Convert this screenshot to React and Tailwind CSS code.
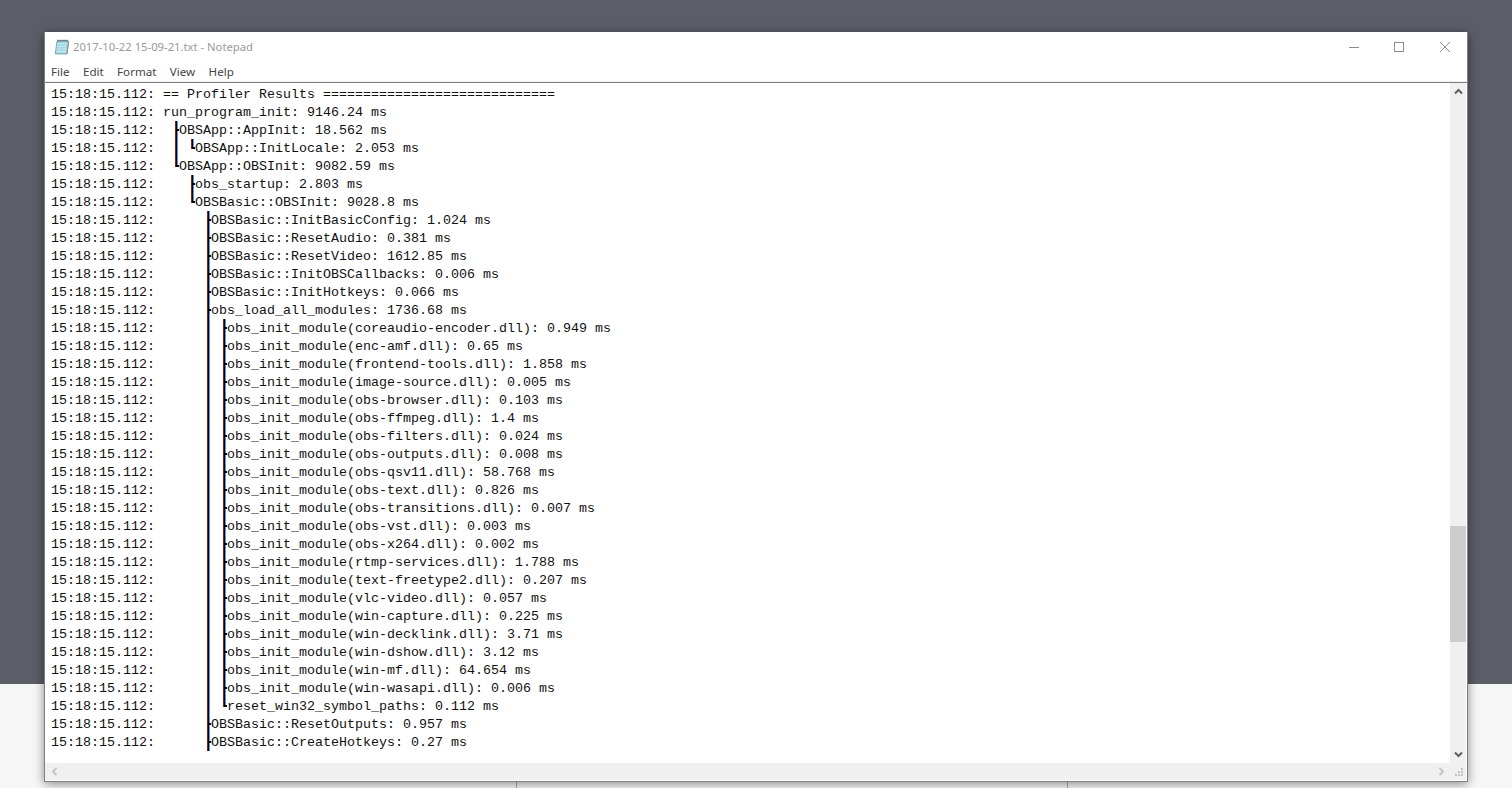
const TS = "15:18:15.112:";

// tree column: | line, T tee, L end, space empty
const rows = [
  ["", "== Profiler Results ============================="],
  ["", "run_program_init: 9146.24 ms"],
  [" T", "OBSApp::AppInit: 18.562 ms"],
  [" | L", "OBSApp::InitLocale: 2.053 ms"],
  [" L", "OBSApp::OBSInit: 9082.59 ms"],
  ["   T", "obs_startup: 2.803 ms"],
  ["   L", "OBSBasic::OBSInit: 9028.8 ms"],
  ["     T", "OBSBasic::InitBasicConfig: 1.024 ms"],
  ["     T", "OBSBasic::ResetAudio: 0.381 ms"],
  ["     T", "OBSBasic::ResetVideo: 1612.85 ms"],
  ["     T", "OBSBasic::InitOBSCallbacks: 0.006 ms"],
  ["     T", "OBSBasic::InitHotkeys: 0.066 ms"],
  ["     T", "obs_load_all_modules: 1736.68 ms"],
  ["     | T", "obs_init_module(coreaudio-encoder.dll): 0.949 ms"],
  ["     | T", "obs_init_module(enc-amf.dll): 0.65 ms"],
  ["     | T", "obs_init_module(frontend-tools.dll): 1.858 ms"],
  ["     | T", "obs_init_module(image-source.dll): 0.005 ms"],
  ["     | T", "obs_init_module(obs-browser.dll): 0.103 ms"],
  ["     | T", "obs_init_module(obs-ffmpeg.dll): 1.4 ms"],
  ["     | T", "obs_init_module(obs-filters.dll): 0.024 ms"],
  ["     | T", "obs_init_module(obs-outputs.dll): 0.008 ms"],
  ["     | T", "obs_init_module(obs-qsv11.dll): 58.768 ms"],
  ["     | T", "obs_init_module(obs-text.dll): 0.826 ms"],
  ["     | T", "obs_init_module(obs-transitions.dll): 0.007 ms"],
  ["     | T", "obs_init_module(obs-vst.dll): 0.003 ms"],
  ["     | T", "obs_init_module(obs-x264.dll): 0.002 ms"],
  ["     | T", "obs_init_module(rtmp-services.dll): 1.788 ms"],
  ["     | T", "obs_init_module(text-freetype2.dll): 0.207 ms"],
  ["     | T", "obs_init_module(vlc-video.dll): 0.057 ms"],
  ["     | T", "obs_init_module(win-capture.dll): 0.225 ms"],
  ["     | T", "obs_init_module(win-decklink.dll): 3.71 ms"],
  ["     | T", "obs_init_module(win-dshow.dll): 3.12 ms"],
  ["     | T", "obs_init_module(win-mf.dll): 64.654 ms"],
  ["     | T", "obs_init_module(win-wasapi.dll): 0.006 ms"],
  ["     | L", "reset_win32_symbol_paths: 0.112 ms"],
  ["     T", "OBSBasic::ResetOutputs: 0.957 ms"],
  ["     T", "OBSBasic::CreateHotkeys: 0.27 ms"],
];

const TreeCell = ({ kind }) => {
  if (kind === " ") return <span className="w-2 shrink-0" />;
  const h = kind === "L" ? 10 : 18;
  return (
    <svg width="8" height="18" viewBox="0 0 8 18" className="mt-[-1px] shrink-0">
      <rect x="4" y="0" width="1" height={h} fill="#8a2400" />
      <rect x="5" y="0" width="1" height={h} fill="#000000" />
      <rect x="6" y="0" width="1" height={h} fill="#4f97f0" />
      {kind !== "|" && <rect x="5" y="8" width="3" height="2" fill="#000000" />}
    </svg>
  );
};

const NotepadIcon = () => (
  <svg width="16" height="16" viewBox="0 0 16 16">
    <path d="M3 2h11.5l-1.6 13H1.2z" fill="#9fd6e4" stroke="#6f98a8" strokeWidth="0.8" />
    <path d="M3.2 5h10.6M3 7.5h10.4M2.7 10h10.4M2.4 12.5h10.4" stroke="#c9eaf0" strokeWidth="1" />
    <path d="M3.5 1.5h10.5" stroke="#333333" strokeWidth="1.4" strokeDasharray="1 1" />
    <path d="M13 15l1.5-12" stroke="#8f8a70" strokeWidth="1" />
  </svg>
);

const App = () => {
  return (
    <div className="relative h-[788px] w-full overflow-hidden">
      <div className="h-[684px] bg-[#5b5e67]" />
      <div className="flex h-[104px] bg-[#f7f7f7]">
        <div className="w-[517px] border-r border-[#a8a8a8]" />
        <div className="w-[551px] border-r border-[#a8a8a8]" />
      </div>

      <div
        className="absolute left-[44px] top-[32px] flex h-[750px] w-[1424px] flex-col border-x border-b border-[#7f7f7f] bg-white shadow-[0_2px_10px_rgba(0,0,0,0.45)]"
        style={{ fontFamily: '"Noto Sans", sans-serif' }}
      >
        {/* title bar */}
        <div className="flex h-[30px] shrink-0 items-center pl-[9px]">
          <NotepadIcon />
          <span className="ml-[3px] text-[11.25px] text-[#9a9a9a]">2017-10-22 15-09-21.txt - Notepad</span>
          <div className="ml-auto flex items-center">
            <svg width="101" height="12" viewBox="0 0 101 12" className="mr-[17px] mt-[1px]">
              <path d="M0 5.5h10" stroke="#8c8c8c" />
              <rect x="45.5" y="0.5" width="9" height="9" fill="none" stroke="#8c8c8c" />
              <path d="M91 0l10 10M101 0l-10 10" stroke="#8c8c8c" />
            </svg>
          </div>
        </div>

        {/* menu */}
        <div className="flex h-[19px] shrink-0 items-center gap-[13.4px] pl-[6px] text-[11.6px] text-[#444444]">
          <span>File</span>
          <span>Edit</span>
          <span>Format</span>
          <span>View</span>
          <span>Help</span>
        </div>
        <div className="h-[1px] shrink-0 bg-[#f0f0f0]" />
        <div className="h-[1px] shrink-0 bg-[#7c7c7c]" />

        <div className="flex min-h-0 flex-1">
          <div className="flex min-w-0 flex-1 flex-col">
            {/* text */}
            <div
              className="flex-1 overflow-hidden pl-[6px] pt-[3px] text-[13.33px] leading-[18px] text-[#111111]"
              style={{ fontFamily: '"Liberation Mono", monospace' }}
            >
              {rows.map(([tree, text], i) => (
                <div key={i} className="flex h-[18px] whitespace-pre">
                  <span className="w-[112px] shrink-0">{TS}</span>
                  {tree.split("").map((c, j) => (
                    <TreeCell key={j} kind={c} />
                  ))}
                  <span>{text}</span>
                </div>
              ))}
            </div>
            {/* horizontal scrollbar */}
            <div className="flex h-[17px] shrink-0 items-center justify-between bg-[#f0f0f0] pl-[6px] pr-[5px]">
              <svg width="7" height="9" viewBox="0 0 7 9">
                <path d="M5.5 1L2 4.5 5.5 8" fill="none" stroke="#c4c4c4" strokeWidth="2" />
              </svg>
              <svg width="7" height="9" viewBox="0 0 7 9">
                <path d="M1.5 1L5 4.5 1.5 8" fill="none" stroke="#c4c4c4" strokeWidth="2" />
              </svg>
            </div>
          </div>
          {/* vertical scrollbar */}
          <div className="mr-[1px] flex w-[16px] shrink-0 flex-col items-center bg-[#f0f0f0]">
            <div className="flex h-[17px] w-full shrink-0 items-center justify-center">
              <svg width="9" height="7" viewBox="0 0 9 7">
                <path d="M1 5.5L4.5 2 8 5.5" fill="none" stroke="#606060" strokeWidth="2" />
              </svg>
            </div>
            <div className="h-[426px] shrink-0" />
            <div className="h-[116px] w-full shrink-0 bg-[#cdcdcd]" />
            <div className="flex-1" />
            <div className="flex h-[17px] w-full shrink-0 items-center justify-center">
              <svg width="9" height="7" viewBox="0 0 9 7">
                <path d="M1 1.5L4.5 5 8 1.5" fill="none" stroke="#606060" strokeWidth="2" />
              </svg>
            </div>
            <div className="flex h-[17px] w-full shrink-0 items-center justify-center">
              <svg width="8" height="8" viewBox="0 0 8 8" className="ml-[1px]">
                <path d="M6 0h2v2H6zM3 3h2v2H3zM6 3h2v2H6zM0 6h2v2H0zM3 6h2v2H3zM6 6h2v2H6z" fill="#c4c4c4" />
              </svg>
            </div>
          </div>
        </div>
        <div className="h-[1px] shrink-0" />
      </div>
    </div>
  );
};

export default App;
